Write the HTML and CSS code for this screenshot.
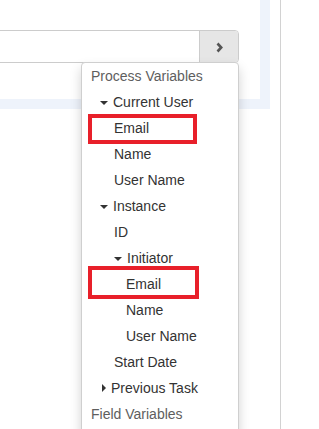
FILE: index.html
```html
<!DOCTYPE html>
<html lang="en">
<head>
  <meta charset="UTF-8">
  <meta name="viewport" content="width=device-width, initial-scale=1.0">
  <title>Variables</title>
  <link rel="stylesheet" href="styles.css">
</head>
<body>

  <div class="page">
    <div class="main">
      <div class="panel">
        <div class="input-group">
          <input type="text" class="field">
          <button class="btn-next">
            <svg width="7" height="11" viewBox="0 0 7 11"><polyline points="1.5,1.5 5.2,5.5 1.5,9.5" fill="none" stroke="#555555" stroke-width="2.6"/></svg>
          </button>

          <div class="dropdown">
            <div class="item head">Process Variables</div>
            <div class="item lvl1"><span class="caret"></span>Current User</div>
            <div class="item leaf1 marked"><span class="mark first"></span>Email</div>
            <div class="item leaf1">Name</div>
            <div class="item leaf1">User Name</div>
            <div class="item lvl1"><span class="caret"></span>Instance</div>
            <div class="item leaf1">ID</div>
            <div class="item lvl2"><span class="caret"></span>Initiator</div>
            <div class="item leaf2 marked"><span class="mark second"></span>Email</div>
            <div class="item leaf2">Name</div>
            <div class="item leaf2">User Name</div>
            <div class="item leaf1">Start Date</div>
            <div class="item lvl1 closed"><span class="caret-right"></span>Previous Task</div>
            <div class="item head">Field Variables</div>
          </div>
        </div>
      </div>
    </div>
    <div class="side"></div>
  </div>

</body>
</html>
```

FILE: styles.css
```css
body {
  margin: 0;
  font-family: "Liberation Sans", Arial, sans-serif;
  font-size: 14px;
  background-color: #ffffff;
  color: #333333;
  overflow: hidden;
}

.page {
  display: flex;
  height: 429px;
  overflow: hidden;
}

.main {
  width: 280px;
  flex-shrink: 0;
}

.side {
  flex: 1;
  border-left: 1px solid #d2d2d2;
}

.panel {
  box-sizing: border-box;
  width: 290px;
  height: 109px;
  margin-left: -20px;
  padding-top: 30px;
  padding-left: 10px;
  border-right: 10px solid #eef3fb;
  border-bottom: 10px solid #eef3fb;
}

.input-group {
  position: relative;
  display: flex;
  width: 249px;
  height: 33px;
  box-sizing: border-box;
  border: 1px solid #cccccc;
  border-radius: 0 4px 4px 0;
}

.field {
  flex: 1;
  border: none;
  outline: none;
  padding: 0 10px;
  font: inherit;
}

.btn-next {
  width: 39px;
  border: none;
  border-left: 1px solid #cccccc;
  border-radius: 0 3px 3px 0;
  background-color: #e6e6e6;
  display: flex;
  align-items: center;
  justify-content: center;
  padding: 0;
  padding-top: 1px;
}

.dropdown {
  position: absolute;
  top: 31px;
  right: -1px;
  width: 158px;
  height: 400px;
  box-sizing: border-box;
  background-color: #ffffff;
  border: 1px solid #cfcfcf;
  border-radius: 4px;
  box-shadow: 0 6px 12px rgba(0, 0, 0, 0.175);
}

.item {
  position: relative;
  height: 26px;
  line-height: 26px;
  white-space: nowrap;
}

.head {
  padding-left: 9px;
  color: #5e5e5e;
}

.lvl1 {
  padding-left: 18px;
}

.lvl2 {
  padding-left: 32px;
}

.leaf1 {
  padding-left: 32px;
}

.leaf2 {
  padding-left: 44px;
}

.closed {
  padding-left: 20px;
}

.caret {
  display: inline-block;
  width: 0;
  height: 0;
  margin-right: 5px;
  vertical-align: middle;
  border-top: 4px solid #333333;
  border-left: 4px solid transparent;
  border-right: 4px solid transparent;
}

.caret-right {
  display: inline-block;
  width: 0;
  height: 0;
  margin-right: 5px;
  vertical-align: middle;
  margin-top: -2px;
  border-left: 4px solid #333333;
  border-top: 4px solid transparent;
  border-bottom: 4px solid transparent;
}

.mark {
  position: absolute;
  left: 6px;
  box-sizing: border-box;
  border: 4px solid #e8202a;
}

.mark.first {
  top: -1px;
  width: 109px;
  height: 30px;
}

.mark.second {
  top: -5px;
  width: 111px;
  height: 33px;
}
```
